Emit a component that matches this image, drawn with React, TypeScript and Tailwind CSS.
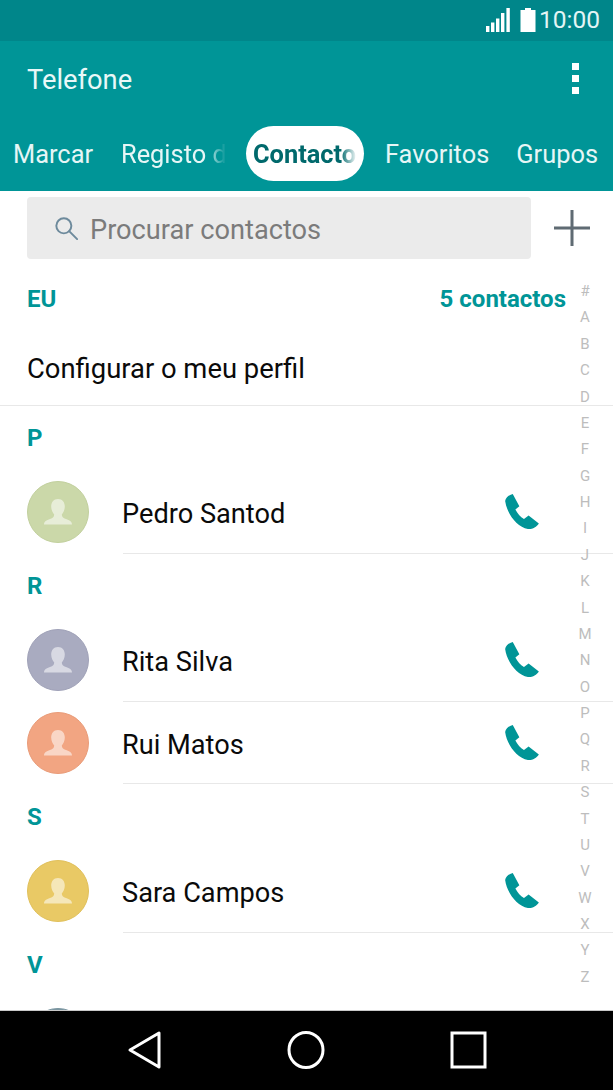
const letters = "#ABCDEFGHIJKLMNOPQRSTUVWXYZ".split("");

function Phone() {
  return (
    <svg viewBox="40 38 108 112" className="w-[36px] h-[37px] shrink-0" aria-hidden="true">
      <path
        d="M43 62 C45 51 54 44 66 41 L86 78 L74 88 C80 100 89 110 100 117 L114 106 L145 130 C138 141 126 148 112 147 C78 140 48 100 43 62 Z"
        fill="#009597"
      />
    </svg>
  );
}

function Avatar({ bg, border }: { bg: string; border: string }) {
  return (
    <svg viewBox="0 0 62 62" className="w-[62px] h-[62px] shrink-0" aria-hidden="true">
      <circle cx="31" cy="31" r="30.5" fill={bg} stroke={border} />
      <path
        d="M31 18 C35.5 18 37.8 21.5 37.8 25.5 C37.8 29 36.2 32 34.8 33.5 C34.8 36 36 37 39 38 C42.5 39.2 45 40.5 45 43.5 L17 43.5 C17 40.5 19.5 39.2 23 38 C26 37 27.2 36 27.2 33.5 C25.8 32 24.2 29 24.2 25.5 C24.2 21.5 26.5 18 31 18 Z"
        fill="#ffffff"
        fillOpacity="0.55"
      />
    </svg>
  );
}

function Section({ label }: { label: string }) {
  return (
    <div className="flex items-center h-[65px] pl-[27px] pb-[1px] text-[24px] font-bold text-[#009597]">
      {label}
    </div>
  );
}

function Contact({ name, bg, border, short }: { name: string; bg: string; border: string; short?: boolean }) {
  return (
    <div className="flex items-start h-[83px] pl-[27px] pt-[10px]">
      <Avatar bg={bg} border={border} />
      <div className={`flex-1 ml-[34px] border-b border-[#e8e8e8] flex items-start ${short ? "h-[72px]" : "h-[73px]"}`}>
        <span className="flex-1 -ml-[1px] mt-[15px] text-[27.2px] leading-[36px] text-[#0a0a0a]">{name}</span>
        <div className="mr-[73px] mt-[12px]">
          <Phone />
        </div>
      </div>
    </div>
  );
}

export default function App() {
  return (
    <div
      className="w-[613px] h-[1090px] flex flex-col overflow-hidden bg-white"
      style={{ fontFamily: "Roboto, sans-serif" }}
    >
      <div className="h-[41px] shrink-0 bg-[#00868a] flex items-center justify-end pr-[13px] text-white">
        <svg viewBox="0 0 24 24" className="w-[24px] h-[24px] mr-[10px] mb-[1px]" aria-hidden="true" fill="#ffffff">
          <rect x="0" y="18" width="3.4" height="6" />
          <rect x="5" y="14.5" width="3.4" height="9.5" />
          <rect x="10" y="10.5" width="3.4" height="13.5" />
          <rect x="15" y="5" width="3.4" height="19" />
          <rect x="20.4" y="0" width="3.4" height="24" />
        </svg>
        <svg viewBox="0 0 16 24" className="w-[16px] h-[24px] mr-[3px] mb-[1px]" aria-hidden="true" fill="#ffffff">
          <path d="M5 0h6v2h4.5v22H.5V2H5z" />
        </svg>
        <span className="text-[24.5px] leading-none text-[#e3f5f5]">10:00</span>
      </div>

      <div className="h-[150px] shrink-0 bg-[#009597] flex flex-col">
        <div className="h-[85px] shrink-0 flex items-start justify-between pl-[27px] pr-[34px]">
          <span className="mt-[22px] text-[27.3px] leading-[34px] text-[#e9f8f8]">Telefone</span>
          <div className="mt-[22px] flex flex-col gap-[5px]">
            <div className="w-[7px] h-[7px] bg-white" />
            <div className="w-[7px] h-[7px] bg-white" />
            <div className="w-[7px] h-[7px] bg-white" />
          </div>
        </div>
        <div className="flex items-center h-[55px] pl-[13px] text-[25.4px] text-[#e6f6f6] whitespace-nowrap">
          <span className="w-[80px] pt-[1px]">Marcar</span>
          <span className="ml-[28px] w-[105px] pt-[1px] overflow-hidden [mask-image:linear-gradient(to_right,black_80%,transparent_100%)]">
            Registo de chamadas
          </span>
          <div className="ml-[20px] w-[118px] h-[55px] rounded-full bg-white px-[7px] flex items-center">
            <span className="w-[104px] pt-[1px] overflow-hidden font-bold text-[#00696c] [mask-image:linear-gradient(to_right,black_84%,transparent_100%)]">
              Contactos
            </span>
          </div>
          <span className="ml-[21px] pt-[1px]">Favoritos</span>
          <span className="ml-[27px] pt-[1px]">Grupos</span>
        </div>
      </div>

      <div className="flex-1 min-h-0 relative overflow-hidden">
        <div className="flex items-center h-[74px] pt-[6px] pb-[6px] pl-[27px] pr-[23px]">
          <div className="flex-1 h-[62px] rounded-[4px] bg-[#ebebeb] flex items-center pl-[28px]">
            <svg viewBox="0 0 26 26" className="w-[23px] h-[23px]" fill="none" stroke="#6d8a9c" strokeWidth="2.2" aria-hidden="true">
              <circle cx="10" cy="10" r="8.5" />
              <path d="M16 16 L25 25" strokeLinecap="round" />
            </svg>
            <span className="ml-[12px] pt-[5px] text-[27.2px] text-[#7b7b7b]">Procurar contactos</span>
          </div>
          <svg viewBox="0 0 36 36" className="w-[36px] h-[36px] ml-[23px]" stroke="#5f6b73" strokeWidth="3" aria-hidden="true">
            <path d="M0 18H36M18 0V36" />
          </svg>
        </div>

        <div className="flex items-center justify-between h-[68px] pl-[27px] pr-[47px] text-[24px] font-bold text-[#009597]">
          <span>EU</span>
          <span>5 contactos</span>
        </div>
        <div className="h-[73px] border-b border-[#e8e8e8] flex items-center pl-[27px] pt-[2px] text-[27.4px] text-[#0a0a0a]">
          Configurar o meu perfil
        </div>

        <Section label="P" />
        <Contact name="Pedro Santod" bg="#cbd8a9" border="#c2d09e" />
        <Section label="R" />
        <Contact name="Rita Silva" bg="#a9abc0" border="#a0a2b8" />
        <Contact name="Rui Matos" bg="#f2a582" border="#e99c79" short />
        <Section label="S" />
        <Contact name="Sara Campos" bg="#e9c965" border="#e0c05c" />
        <Section label="V" />
        <Contact name="" bg="#7a95a0" border="#7a95a0" />

        <div className="absolute top-[87px] right-[20px] w-[16px] flex flex-col items-center text-[15px] text-[#bdbdbd]">
          {letters.map((l) => (
            <span key={l} className="h-[26.38px] leading-[26px]">
              {l}
            </span>
          ))}
        </div>
      </div>

      <div className="h-[80px] shrink-0 bg-black border-t border-[#c8c8c8] flex items-center">
        <svg viewBox="0 0 613 79" className="w-[613px] h-[79px]" fill="none" stroke="#ffffff" strokeWidth="3" aria-hidden="true">
          <path d="M159 22 L159 56 L130 39 Z" strokeLinejoin="round" />
          <ellipse cx="306" cy="39" rx="17" ry="17.5" />
          <rect x="452" y="22" width="33" height="34" />
        </svg>
      </div>
    </div>
  );
}
